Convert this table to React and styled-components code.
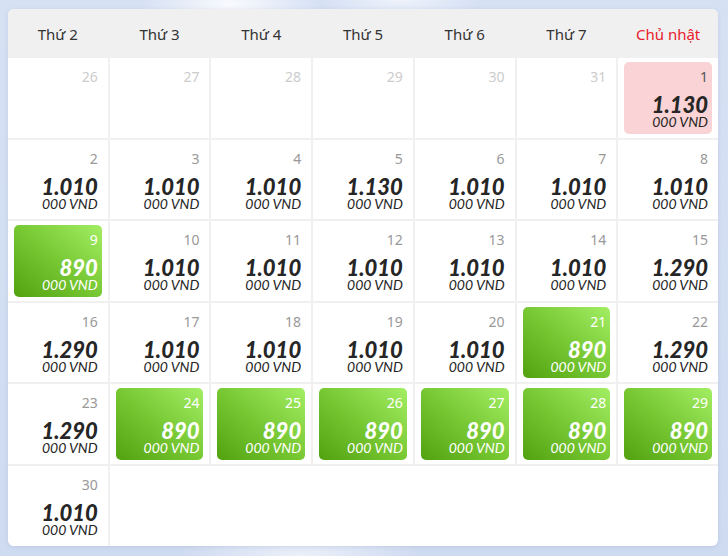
import React from 'react';
import styled, { createGlobalStyle } from 'styled-components';

const GlobalStyle = createGlobalStyle`
    html, body {
        margin: 0;
        height: 100%;
    }
    body {
        background:
            radial-gradient(ellipse 90px 30px at 230px 4px, rgba(255,255,255,0.85), transparent),
            radial-gradient(ellipse 80px 20px at 400px 0px, rgba(255,255,255,0.6), transparent),
            radial-gradient(ellipse 120px 30px at 300px 556px, rgba(255,255,255,0.6), transparent),
            linear-gradient(180deg, #d6e1f4 0%, #cfdbf1 100%);
        font-family: "Noto Sans", sans-serif;
    }
    #root {
        padding: 9px 10px 0 8px;
    }
`;

const Card = styled.div`
    width: 710px;
    background: #fff;
    border-radius: 6px;
    overflow: hidden;
    box-shadow: 0 1px 4px rgba(80, 100, 150, 0.15);
`;

const Header = styled.div`
    display: grid;
    grid-template-columns: repeat(7, 1fr);
    column-gap: 2px;
    height: 49px;
    background: #f0f0f0;
`;

const DayName = styled.div`
    display: flex;
    align-items: center;
    justify-content: center;
    font-size: 15px;
    color: ${({ $sunday }) => ($sunday ? '#e8202c' : '#333')};
`;

const Grid = styled.div`
    display: grid;
    grid-template-columns: repeat(7, 1fr);
    grid-auto-rows: 79.6px;
    gap: 2px;
`;

const Cell = styled.div`
    background: #fff;
    outline: 2px solid #f0f0f0;
    display: flex;
`;

const Box = styled.div`
    flex: 1;
    margin: 4px 6px;
    padding: 6px 4px 0 4px;
    border-radius: 5px;
    display: flex;
    flex-direction: column;
    align-items: flex-end;
    background: ${({ $kind }) =>
        $kind === 'green'
            ? 'linear-gradient(40deg, #52a210 0%, #78c834 50%, #a3ee64 100%)'
            : $kind === 'pink'
            ? '#f9d3d5'
            : 'transparent'};
    color: ${({ $kind }) => ($kind === 'green' ? '#fff' : '#262626')};
`;

const DayNum = styled.div`
    font-size: 14px;
    line-height: 18px;
    color: ${({ $muted, $kind }) =>
        $kind === 'green' ? '#fff' : $kind === 'pink' ? '#555' : $muted ? '#ccc' : '#999'};
`;

const Price = styled.div`
    margin-top: 10px;
    font-family: Lato, sans-serif;
    font-weight: 900;
    font-style: italic;
    font-size: 22px;
    line-height: 18px;
`;

const Unit = styled.div`
    margin-top: 2px;
    font-family: Lato, sans-serif;
    font-weight: 400;
    font-style: italic;
    font-size: 14px;
    line-height: 12px;
`;

const days = ['Thứ 2', 'Thứ 3', 'Thứ 4', 'Thứ 5', 'Thứ 6', 'Thứ 7', 'Chủ nhật'];

const cells = [
    { d: 26, muted: true }, { d: 27, muted: true }, { d: 28, muted: true },
    { d: 29, muted: true }, { d: 30, muted: true }, { d: 31, muted: true },
    { d: 1, p: '1.130', kind: 'pink' },
    { d: 2, p: '1.010' }, { d: 3, p: '1.010' }, { d: 4, p: '1.010' }, { d: 5, p: '1.130' },
    { d: 6, p: '1.010' }, { d: 7, p: '1.010' }, { d: 8, p: '1.010' },
    { d: 9, p: '890', kind: 'green' }, { d: 10, p: '1.010' }, { d: 11, p: '1.010' },
    { d: 12, p: '1.010' }, { d: 13, p: '1.010' }, { d: 14, p: '1.010' }, { d: 15, p: '1.290' },
    { d: 16, p: '1.290' }, { d: 17, p: '1.010' }, { d: 18, p: '1.010' }, { d: 19, p: '1.010' },
    { d: 20, p: '1.010' }, { d: 21, p: '890', kind: 'green' }, { d: 22, p: '1.290' },
    { d: 23, p: '1.290' }, { d: 24, p: '890', kind: 'green' }, { d: 25, p: '890', kind: 'green' },
    { d: 26, p: '890', kind: 'green' }, { d: 27, p: '890', kind: 'green' },
    { d: 28, p: '890', kind: 'green' }, { d: 29, p: '890', kind: 'green' },
    { d: 30, p: '1.010' },
];

const App = () => (
    <>
        <GlobalStyle />
        <Card>
            <Header>
                {days.map((name, i) => (
                    <DayName key={name} $sunday={i === 6}>{name}</DayName>
                ))}
            </Header>
            <Grid>
                {cells.map((c, i) => (
                    <Cell key={i}>
                        <Box $kind={c.kind}>
                            <DayNum $muted={c.muted} $kind={c.kind}>{c.d}</DayNum>
                            {c.p && (
                                <>
                                    <Price>{c.p}</Price>
                                    <Unit>000 VND</Unit>
                                </>
                            )}
                        </Box>
                    </Cell>
                ))}
            </Grid>
        </Card>
    </>
);

export default App;
